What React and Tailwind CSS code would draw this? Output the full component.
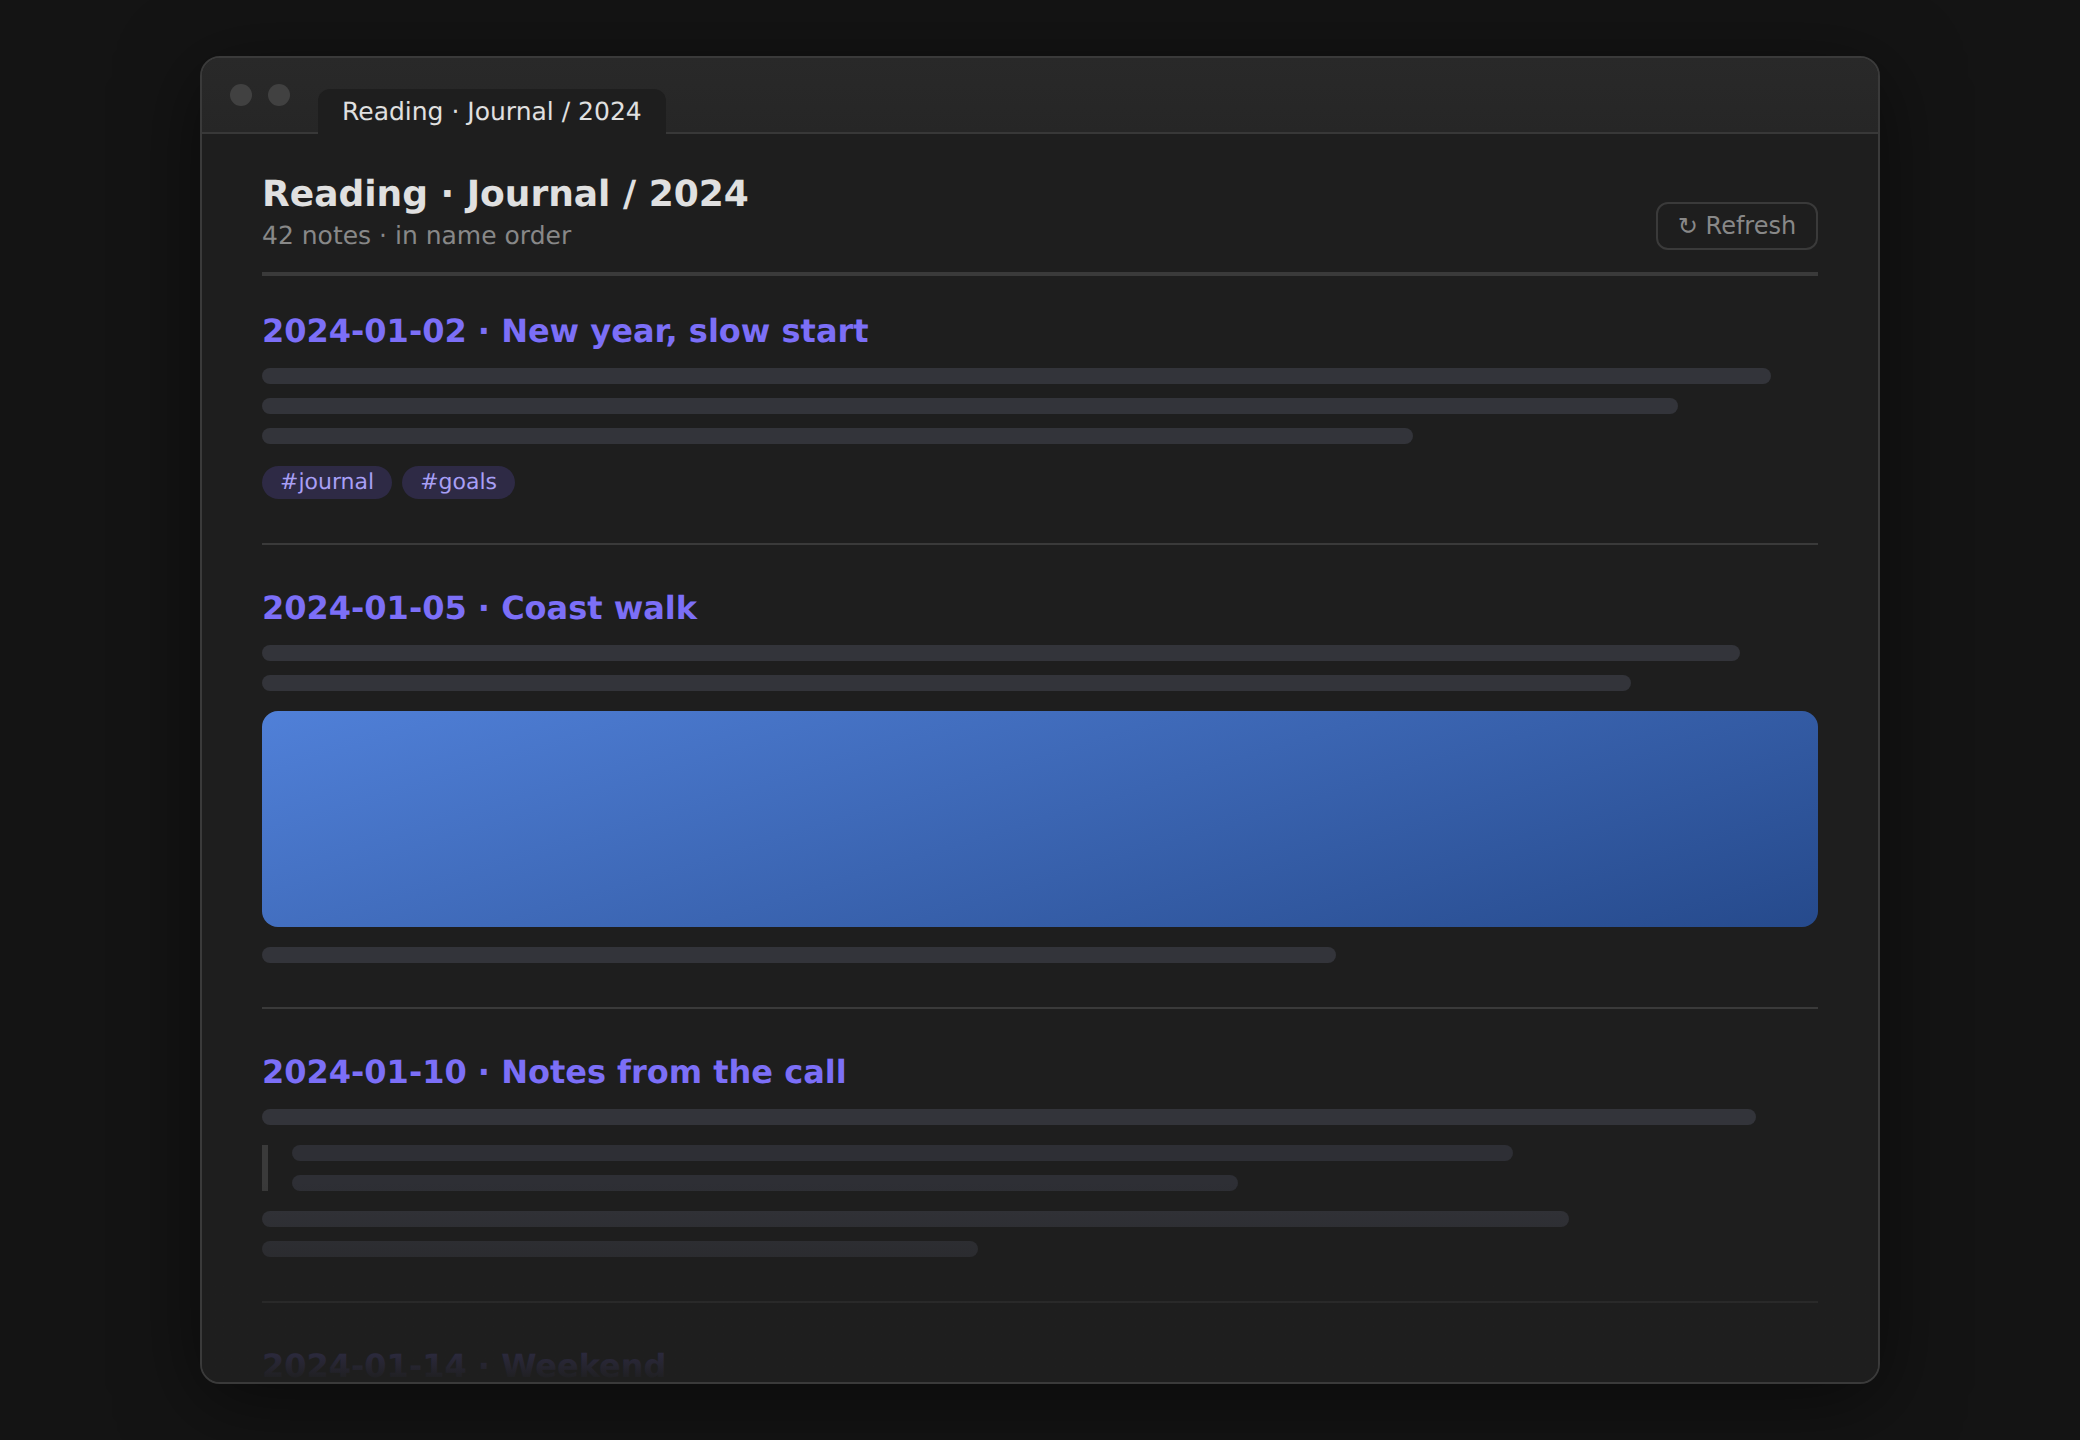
const FONT = "font-['DejaVu_Sans',sans-serif]";

function Bar({ w, dim }) {
  return <div className={`h-4 rounded-lg ${dim ? "bg-[#2e2f35]" : "bg-[#33343a]"}`} style={{ width: w }} />;
}

function Title({ children }) {
  return <h2 className="text-[32px] leading-[42px] font-bold text-[#7c6ff7]">{children}</h2>;
}

function Tag({ children }) {
  return (
    <span className="h-[33px] flex items-center px-[18px] rounded-full bg-[#2e2a45] text-[22px] text-[#a89ff5]">
      {children}
    </span>
  );
}

export default function App() {
  return (
    <div className={`min-h-[1440px] bg-[#141414] pt-14 px-[200px] ${FONT} [text-rendering:geometricPrecision]`}>
      <div className="relative h-[1328px] border-2 border-[#3a3a3a] rounded-[20px] bg-[#1e1e1e] overflow-hidden shadow-[0_16px_80px_rgba(0,0,0,0.5)]">
        <div className="h-[76px] flex items-center border-b-2 border-[#383838] bg-gradient-to-b from-[#292929] to-[#262626] pl-7 gap-4">
          <span className="w-[22px] h-[22px] rounded-full bg-[#414141]" />
          <span className="w-[22px] h-[22px] rounded-full bg-[#414141]" />
          <div className="self-end -mb-[2px] ml-3 h-[45px] w-[348px] pl-6 flex items-center rounded-t-xl bg-[#1e1e1e] text-[25px] text-[#e0e0e0]">
            Reading · Journal / 2024
          </div>
        </div>
        <div className="px-[60px]">
          <header className="flex items-end justify-between pt-[38px] pb-[21px] border-b-4 border-[#3a3a3a]">
            <div>
              <h1 className="text-[36px] leading-[46px] font-bold text-[#e0e0e0]">Reading · Journal / 2024</h1>
              <p className="mt-[3px] text-[25px] leading-[30px] text-[#888888]">42 notes · in name order</p>
            </div>
            <button className="mb-[1px] h-12 w-[162px] rounded-xl border-2 border-[#3a3a3a] text-[24px] text-[#888888] flex items-center justify-center">
              ↻ Refresh
            </button>
          </header>
          <section className="pt-[34px] pb-11 border-b-2 border-[#3a3a3a]">
            <Title>2024-01-02 · New year, slow start</Title>
            <div className="mt-4 flex flex-col gap-[14px]">
              <Bar w="97%" />
              <Bar w="91%" />
              <Bar w="74%" />
            </div>
            <div className="mt-[22px] flex gap-[10px]">
              <Tag>#journal</Tag>
              <Tag>#goals</Tag>
            </div>
          </section>
          <section className="pt-[42px] pb-11 border-b-2 border-[#3a3a3a]">
            <Title>2024-01-05 · Coast walk</Title>
            <div className="mt-4 flex flex-col gap-[14px]">
              <Bar w="95%" />
              <Bar w="88%" />
            </div>
            <div className="mt-5 h-[216px] rounded-[16px] bg-[linear-gradient(163deg,#5080d8,#264a8c)]" />
            <div className="mt-5 flex flex-col">
              <Bar w="69%" />
            </div>
          </section>
          <section className="pt-[42px] pb-11 border-b-2 border-[#3a3a3a]">
            <Title>2024-01-10 · Notes from the call</Title>
            <div className="mt-4"><Bar w="96%" /></div>
            <div className="mt-5 border-l-[6px] border-[#3a3a3a] pl-6 flex flex-col gap-[14px]">
              <Bar w="80%" dim />
              <Bar w="62%" dim />
            </div>
            <div className="mt-5 flex flex-col gap-[14px]">
              <Bar w="84%" />
              <Bar w="46%" />
            </div>
          </section>
          <section className="pt-[42px]">
            <Title>2024-01-14 · Weekend</Title>
          </section>
        </div>
        <div className="absolute left-0 right-0 bottom-0 h-[200px] bg-gradient-to-b from-transparent to-[#1e1e1e]" />
      </div>
    </div>
  );
}
